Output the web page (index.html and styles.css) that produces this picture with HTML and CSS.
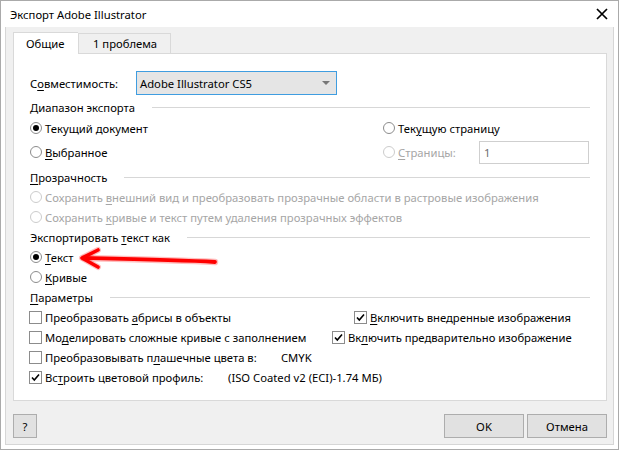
FILE: index.html
```html
<!DOCTYPE html>
<html lang="ru">
<head>
<meta charset="utf-8">
<title>Экспорт Adobe Illustrator</title>
<link rel="stylesheet" href="styles.css">
</head>
<body>
<div class="window">
  <div class="titlebar">
    <span class="title">Экспорт Adobe Illustrator</span>
    <svg class="close" width="12" height="12" viewBox="0 0 12 12"><path d="M1 1 L11 11 M11 1 L1 11" stroke="#000" stroke-width="1.7" fill="none"/></svg>
  </div>
  <div class="client">
    <div class="tabs">
      <div class="tab active">Общие</div>
      <div class="tab second">1 проблема</div>
    </div>
    <div class="panel">
      <div class="combo-row">
        <span class="combo-label">С<u>о</u>вместимость:</span>
        <div class="combo"><span class="ctext">Adobe Illustrator CS5</span><span class="arrow"></span></div>
      </div>

      <div class="group-head g1"><span>Диапазон экспорта</span><span class="rule"></span></div>
      <div class="range-row r1">
        <div class="opt"><span class="radio checked"></span><span>Текущий документ</span></div>
        <div class="opt"><span class="radio"></span><span>Тек<u>у</u>щую страницу</span></div>
      </div>
      <div class="range-row r2">
        <div class="opt"><span class="radio"></span><span><u>В</u>ыбранное</span></div>
        <div class="opt disabled"><span class="radio"></span><span><u>С</u>траницы:</span></div>
        <div class="field">1</div>
      </div>

      <div class="group-head g2"><span><u>П</u>розрачность</span><span class="rule"></span></div>
      <div class="opt row disabled"><span class="radio"></span><span>Сохранить <u>в</u>нешний вид и преобразовать прозрачные области в растровые изображения</span></div>
      <div class="opt row disabled"><span class="radio"></span><span>Сохранить <u>к</u>ривые и текст путем удаления прозрачных эффектов</span></div>

      <div class="group-head"><span>Экспортировать <u>т</u>екст как</span><span class="rule"></span></div>
      <div class="opt row"><span class="radio checked"></span><span><u>Т</u>екст</span></div>
      <div class="opt row"><span class="radio"></span><span><u>К</u>ривые</span></div>

      <div class="group-head"><span><u>П</u>араметры</span><span class="rule"></span></div>
      <div class="check-row">
        <div class="opt c1"><span class="box"></span><span>Преобразовать <u>а</u>брисы в объекты</span></div>
        <div class="opt"><span class="box"><svg width="11" height="11" viewBox="0 0 11 11"><path d="M2 5.5 L4.3 8 L9 2.5" stroke="#000" stroke-width="1.6" fill="none"/></svg></span><span><u>В</u>ключить внедренные изображения</span></div>
      </div>
      <div class="check-row">
        <div class="opt c2"><span class="box"></span><span>Мо<u>д</u>елировать сложные кривые с заполнением</span></div>
        <div class="opt"><span class="box"><svg width="11" height="11" viewBox="0 0 11 11"><path d="M2 5.5 L4.3 8 L9 2.5" stroke="#000" stroke-width="1.6" fill="none"/></svg></span><span>Вк<u>л</u>ючить предварительно изображение</span></div>
      </div>
      <div class="check-row">
        <div class="opt c3"><span class="box"></span><span>Преобразовывать п<u>л</u>ашечные цвета в:</span></div>
        <div class="value">CMYK</div>
      </div>
      <div class="check-row">
        <div class="opt c4"><span class="box"><svg width="11" height="11" viewBox="0 0 11 11"><path d="M2 5.5 L4.3 8 L9 2.5" stroke="#000" stroke-width="1.6" fill="none"/></svg></span><span>Вс<u>т</u>роить цветовой профиль:</span></div>
        <div class="value">(ISO Coated v2 (ECI)-1.74 МБ)</div>
      </div>
    </div>
    <div class="buttons">
      <div class="btn help">?</div>
      <div class="spacer"></div>
      <div class="btn">OK</div>
      <div class="btn">Отмена</div>
    </div>
  </div>
  <svg class="annot" width="619" height="450" viewBox="0 0 619 450">
    <g stroke="#ff0000" fill="none" stroke-linecap="round" stroke-linejoin="round">
      <path d="M98 250 L82 258 L98 267" stroke-width="6" opacity="0.25"/>
      <path d="M84 258 C130 259 180 260 215 262" stroke-width="6.5" opacity="0.25"/>
      <path d="M98 250 L82 258 L98 267" stroke-width="3.6"/>
      <path d="M84 258 C130 259 180 260 215 262" stroke-width="3.8"/>
    </g>
  </svg>
</div>
</body>
</html>
```
FILE: styles.css
```css
* { box-sizing: border-box; }
html, body { margin: 0; padding: 0; background: #fff; }
body {
  font-family: "Noto Sans", "Open Sans", "DejaVu Sans", sans-serif;
  font-size: 11.25px;
  color: #000;
}
u { text-decoration: underline; text-underline-offset: 2px; text-decoration-thickness: 1px; }

.window {
  position: relative;
  width: 619px;
  height: 450px;
  border: 1px solid #aaaaaa;
  background: #fff;
  display: flex;
  flex-direction: column;
}
.titlebar {
  height: 26px;
  display: flex;
  align-items: center;
  padding-left: 9px;
  padding-right: 10px;
  flex: none;
}
.title { flex: 1; }
.close { display: block; margin-top: -1px; }

.client {
  flex: 1;
  margin: 0 4px 4px;
  background: #f0f0f0;
  border: 1px solid #d6d6d6;
  border-top: none;
  padding: 5px 6px 0 7px;
  display: flex;
  flex-direction: column;
}

.tabs { display: flex; align-items: flex-end; height: 21px; flex: none; }
.tab {
  height: 20px;
  white-space: nowrap;
  border: 1px solid #d9d9d9;
  border-bottom: none;
  background: #f0f0f0;
  display: flex;
  align-items: center;
}
.tab.active {
  position: relative;
  z-index: 1;
  height: 22px;
  margin-bottom: -1px;
  width: 65px;
  padding: 0 0 1px 12px;
  background: #fff;
  border-right: none;
}
.tab.second { width: 93px; padding: 0 0 0 14px; }

.panel {
  height: 348px;
  flex: none;
  background: #fff;
  border: 1px solid #d9d9d9;
  padding: 17px 16px 0 16px;
}

.combo-row { display: flex; align-items: center; height: 24px; }
.combo-label { width: 106px; }
.combo {
  width: 201px;
  height: 24px;
  background: #e5e5e5;
  border: 1px solid #3f9de0;
  display: flex;
  align-items: center;
  padding-left: 3px;
  padding-right: 6px;
}
.ctext { flex: 1; }
.arrow {
  width: 0; height: 0;
  border-left: 4px solid transparent;
  border-right: 4px solid transparent;
  border-top: 4px solid #777;
}

.group-head { display: flex; align-items: center; height: 20px; }
.group-head .rule { flex: 1; height: 1px; background: #d7d7d7; margin-left: 17px; }
.g1 { margin-top: 2px; }
.g2 { margin-top: 3px; }

.opt { display: flex; align-items: center; white-space: nowrap; }
.row { height: 20px; }
.disabled { color: #a6a6a6; }

.radio {
  width: 12px; height: 12px;
  border: 1px solid #8c8c8c;
  border-radius: 50%;
  margin-right: 3px;
  display: flex;
  align-items: center;
  justify-content: center;
  flex: none;
  background: #fff;
}
.radio.checked::after {
  content: "";
  width: 6px; height: 6px;
  border-radius: 50%;
  background: #000;
}
.disabled .radio { border-color: #cccccc; }

.range-row { display: grid; grid-template-columns: 353px 96px 110px; align-items: center; }
.r1 { height: 20px; margin-top: 1px; }
.r2 { height: 24px; margin-top: 2px; }
.field {
  height: 23px;
  border: 1px solid #cfcfcf;
  background: #fff;
  color: #6d6d6d;
  padding-left: 4px;
  display: flex;
  align-items: center;
}

.check-row { display: flex; align-items: center; height: 20px; }
.c1 { width: 325px; }
.c2 { width: 303px; }
.c3 { width: 251px; }
.c4 { width: 198px; }
.box {
  width: 13px; height: 13px;
  border: 1px solid #8c8c8c;
  background: #fff;
  margin-left: -1px;
  margin-right: 3px;
  flex: none;
  display: flex;
  align-items: center;
  justify-content: center;
}
.box svg { display: block; }

.buttons { display: flex; margin-top: 13px; gap: 3px; height: 24px; flex: none; }
.spacer { flex: 1; }
.btn {
  width: 80px;
  height: 24px;
  background: #e1e1e1;
  border: 1px solid #adadad;
  display: flex;
  align-items: center;
  justify-content: center;
}
.btn.help { width: 24px; }

.annot { position: absolute; left: -1px; top: -1px; pointer-events: none; }
```
